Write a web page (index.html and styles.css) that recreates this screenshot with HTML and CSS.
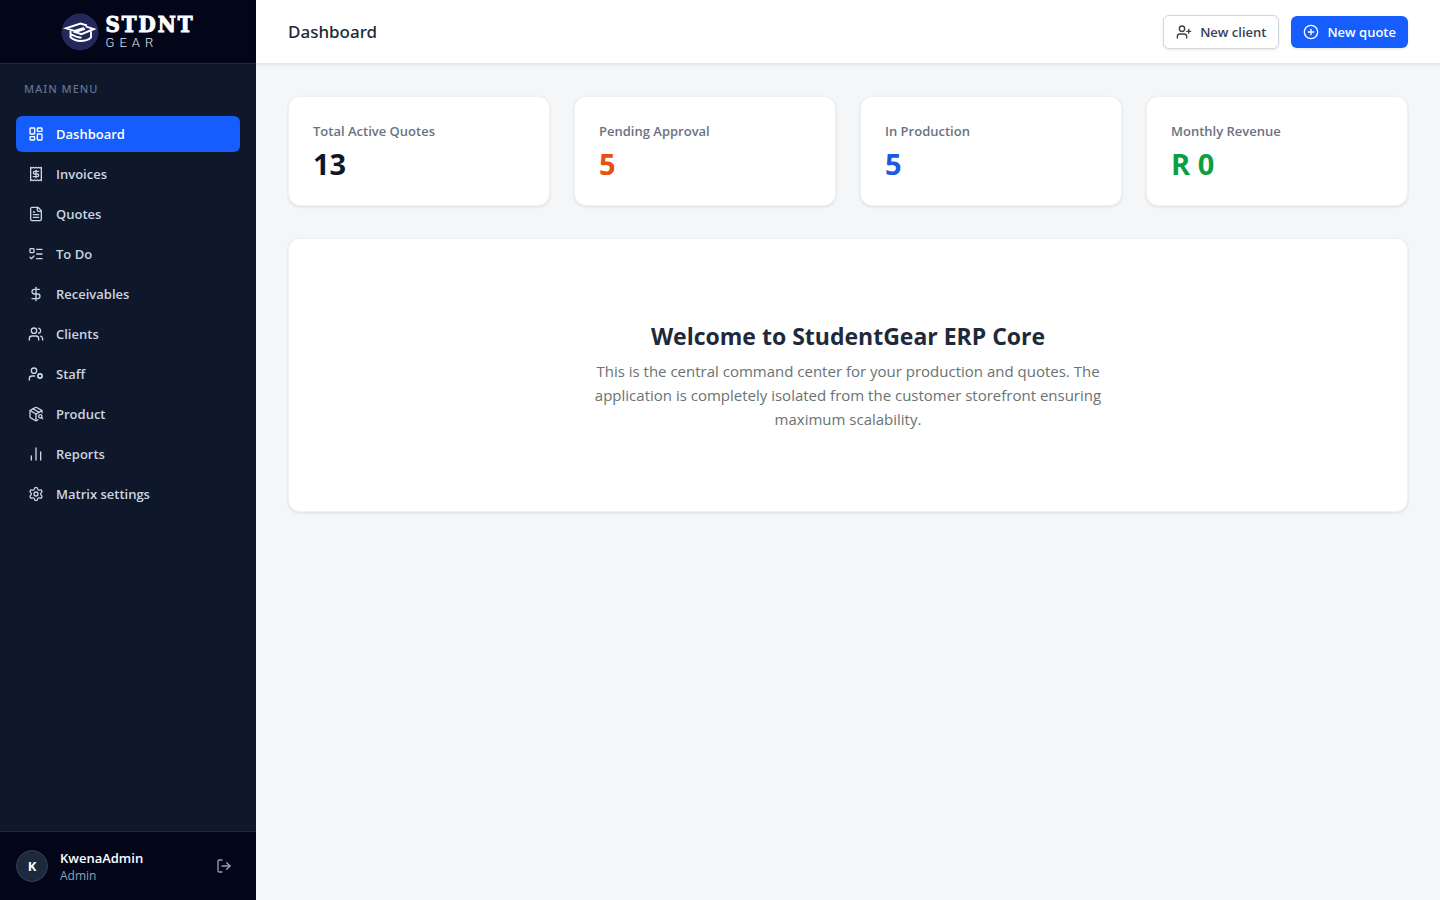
FILE: index.html
```html
<!DOCTYPE html>
<html lang="en">
<head>
  <meta charset="UTF-8">
  <meta name="viewport" content="width=device-width, initial-scale=1.0">
  <title>StudentGear ERP - Dashboard</title>
  <link rel="stylesheet" href="styles.css">
</head>
<body>
  <!-- Sidebar -->
  <aside class="sidebar">
    <div class="brand">
      <svg class="brand-mark" viewBox="0 0 38 38" aria-hidden="true">
        <circle cx="19" cy="19" r="18.500" fill="#23275a"/>
        <g fill="none" stroke="#fff" stroke-width="1.900" stroke-linejoin="miter">
          <path d="M26 12.500 19.500 10.500 5 15.300l8.500 2.700 9.500-3.200M24.500 13.300 33 16l-12.500 5.200-6-2 9.500-3.400"/>
          <path d="M9.500 18v6.300c3 2.500 6 3.700 10 3.700s8-1.200 10.500-3.500v-6.300M9.500 21c4 2.300 6.500 3.500 11 3.700"/>
        </g>
      </svg>
      <div class="brand-name">
        <span class="brand-top">STDNT</span>
        <span class="brand-bottom">GEAR</span>
      </div>
    </div>

    <nav class="menu">
      <h2>Main Menu</h2>
      <a href="#" class="active">
        <svg class="icon" viewBox="0 0 24 24"><rect width="7" height="9" x="3" y="3" rx="1"/><rect width="7" height="5" x="14" y="3" rx="1"/><rect width="7" height="9" x="14" y="12" rx="1"/><rect width="7" height="5" x="3" y="16" rx="1"/></svg>
        Dashboard
      </a>
      <a href="#">
        <svg class="icon" viewBox="0 0 24 24"><path d="M4 2v20l2-1 2 1 2-1 2 1 2-1 2 1 2-1 2 1V2l-2 1-2-1-2 1-2-1-2 1-2-1-2 1Z"/><path d="M16 8h-6a2 2 0 1 0 0 4h4a2 2 0 1 1 0 4H8"/><path d="M12 17.500v-11"/></svg>
        Invoices
      </a>
      <a href="#">
        <svg class="icon" viewBox="0 0 24 24"><path d="M15 2H6a2 2 0 0 0-2 2v16a2 2 0 0 0 2 2h12a2 2 0 0 0 2-2V7Z"/><path d="M14 2v4a2 2 0 0 0 2 2h4"/><path d="M10 9H8"/><path d="M16 13H8"/><path d="M16 17H8"/></svg>
        Quotes
      </a>
      <a href="#">
        <svg class="icon" viewBox="0 0 24 24"><rect x="3" y="4" width="6" height="6" rx="1"/><path d="m3 17 2 2 4-4"/><path d="M13 5h8"/><path d="M13 12h8"/><path d="M13 19h8"/></svg>
        To Do
      </a>
      <a href="#">
        <svg class="icon" viewBox="0 0 24 24"><path d="M12 2v20"/><path d="M17 5H9.500a3.500 3.500 0 0 0 0 7h5a3.500 3.500 0 0 1 0 7H6"/></svg>
        Receivables
      </a>
      <a href="#">
        <svg class="icon" viewBox="0 0 24 24"><path d="M16 21v-2a4 4 0 0 0-4-4H6a4 4 0 0 0-4 4v2"/><circle cx="9" cy="7" r="4"/><path d="M22 21v-2a4 4 0 0 0-3-3.870"/><path d="M16 3.130a4 4 0 0 1 0 7.750"/></svg>
        Clients
      </a>
      <a href="#">
        <svg class="icon" viewBox="0 0 24 24"><circle cx="18" cy="15" r="3"/><circle cx="9" cy="7" r="4"/><path d="M10 15H6a4 4 0 0 0-4 4v2"/><path d="m21.700 16.400-.9-.3"/><path d="m15.200 13.900-.9-.3"/><path d="m16.600 18.700.3-.9"/><path d="m19.100 12.200.3-.9"/><path d="m19.600 18.700-.4-1"/><path d="m16.800 12.300-.4-1"/><path d="m14.300 16.600 1-.4"/><path d="m20.700 13.800 1-.4"/></svg>
        Staff
      </a>
      <a href="#">
        <svg class="icon" viewBox="0 0 24 24"><path d="M21 10V8a2 2 0 0 0-1-1.730l-7-4a2 2 0 0 0-2 0l-7 4A2 2 0 0 0 3 8v8a2 2 0 0 0 1 1.730l7 4a2 2 0 0 0 2 0l2-1.140"/><path d="m7.500 4.270 9 5.150"/><path d="M3.290 7 12 12l8.710-5"/><path d="M12 22V12"/><circle cx="18.500" cy="15.500" r="2.500"/><path d="M20.270 17.270 22 19"/></svg>
        Product
      </a>
      <a href="#">
        <svg class="icon" viewBox="0 0 24 24"><path d="M5 21v-6"/><path d="M12 21V3"/><path d="M19 21V9"/></svg>
        Reports
      </a>
      <a href="#">
        <svg class="icon" viewBox="0 0 24 24"><path d="M9.671 4.136a2.340 2.340 0 0 1 4.659 0 2.340 2.340 0 0 0 3.319 1.915 2.340 2.340 0 0 1 2.330 4.033 2.340 2.340 0 0 0 0 3.831 2.340 2.340 0 0 1-2.330 4.033 2.340 2.340 0 0 0-3.319 1.915 2.340 2.340 0 0 1-4.659 0 2.340 2.340 0 0 0-3.320-1.915 2.340 2.340 0 0 1-2.330-4.033 2.340 2.340 0 0 0 0-3.831A2.340 2.340 0 0 1 6.350 6.051a2.340 2.340 0 0 0 3.319-1.915"/><circle cx="12" cy="12" r="3"/></svg>
        Matrix settings
      </a>
    </nav>

    <div class="user">
      <div class="avatar">K</div>
      <div class="user-info">
        <div class="user-name">KwenaAdmin</div>
        <div class="user-role">Admin</div>
      </div>
      <button class="logout" aria-label="Log out">
        <svg class="icon" viewBox="0 0 24 24"><path d="M9 21H5a2 2 0 0 1-2-2V5a2 2 0 0 1 2-2h4"/><path d="m16 17 5-5-5-5"/><path d="M21 12H9"/></svg>
      </button>
    </div>
  </aside>

  <!-- Main area -->
  <div class="main">
    <header class="topbar">
      <h1>Dashboard</h1>
      <div class="actions">
        <button class="btn btn-outline">
          <svg class="icon" viewBox="0 0 24 24"><path d="M16 21v-2a4 4 0 0 0-4-4H6a4 4 0 0 0-4 4v2"/><circle cx="9" cy="7" r="4"/><path d="M19 8v6"/><path d="M22 11h-6"/></svg>
          New client
        </button>
        <button class="btn btn-primary">
          <svg class="icon" viewBox="0 0 24 24"><circle cx="12" cy="12" r="10"/><path d="M8 12h8"/><path d="M12 8v8"/></svg>
          New quote
        </button>
      </div>
    </header>

    <main class="content">
      <section class="stats">
        <div class="card stat">
          <h3>Total Active Quotes</h3>
          <p>13</p>
        </div>
        <div class="card stat">
          <h3>Pending Approval</h3>
          <p class="orange">5</p>
        </div>
        <div class="card stat">
          <h3>In Production</h3>
          <p class="blue">5</p>
        </div>
        <div class="card stat">
          <h3>Monthly Revenue</h3>
          <p class="green">R 0</p>
        </div>
      </section>

      <section class="card welcome">
        <h2>Welcome to StudentGear ERP Core</h2>
        <p>This is the central command center for your production and quotes. The application is completely isolated from the customer storefront ensuring maximum scalability.</p>
      </section>
    </main>
  </div>
</body>
</html>
```

FILE: styles.css
```css
* { box-sizing: border-box; margin: 0; padding: 0; }
body { display: flex; min-height: 100vh; font-family: "Segoe UI", "Open Sans", "Noto Sans", sans-serif; font-size: 16px; line-height: 24px; color: #101828; background: #f5f6f8; }
button { font: inherit; cursor: pointer; }
.icon { width: 16px; height: 16px; flex-shrink: 0; fill: none; stroke: currentColor; stroke-width: 2; stroke-linecap: round; stroke-linejoin: round; }

/* Sidebar */
.sidebar { display: flex; flex-direction: column; flex: 0 0 256px; background: #0f172b; color: #cad5e2; }
.brand { display: flex; align-items: center; justify-content: center; gap: 6px; height: 64px; background: #020618; border-bottom: 1px solid #1d293d; }
.brand-mark { width: 38px; height: 38px; }
.brand-name { display: flex; flex-direction: column; color: #fff; }
.brand-top { font-family: "DejaVu Serif Condensed", "DejaVu Serif", serif; font-size: 22px; font-weight: 700; line-height: 22px; letter-spacing: 2px; -webkit-text-stroke: 1px #fff; }
.brand-bottom { font-family: Roboto, sans-serif; font-size: 13px; font-weight: 300; line-height: 16px; letter-spacing: 5px; color: #e2e8f0; }
.menu { display: flex; flex-direction: column; flex: 1; gap: 4px; padding: 16px; }
.menu h2 { padding: 0 8px; margin-bottom: 14px; font-family: "Segoe UI", "Noto Sans", sans-serif; font-size: 11px; font-weight: 500; line-height: 18px; letter-spacing: 1px; text-transform: uppercase; color: #62748e; }
.menu a { display: flex; align-items: center; gap: 12px; padding: 8px 12px; border-radius: 6px; font-size: 13px; font-weight: 600; line-height: 20px; color: #cad5e2; text-decoration: none; }
.menu a:hover { background: #1d293d; }
.menu a.active { background: #155dfc; color: #fff; }
.user { display: flex; align-items: center; gap: 12px; padding: 16px; background: #020618; border-top: 1px solid #1d293d; }
.avatar { display: flex; align-items: center; justify-content: center; width: 32px; height: 32px; border: 1px solid #314158; border-radius: 50%; background: #1d293d; font-size: 13px; font-weight: 700; color: #fff; }
.user-info { flex: 1; }
.user-name { font-size: 13px; font-weight: 600; line-height: 20px; color: #fff; }
.user-role { font-size: 12px; line-height: 16px; color: #90a1b9; }
.logout { display: flex; padding: 8px; border: none; background: none; color: #90a1b9; }

/* Top bar */
.main { display: flex; flex-direction: column; flex: 1; min-width: 0; }
.topbar { display: flex; align-items: center; justify-content: space-between; height: 64px; padding: 0 32px; background: #fff; border-bottom: 1px solid #e5e7eb; box-shadow: 0 1px 3px rgba(0, 0, 0, 0.08); }
.topbar h1 { font-family: "Segoe UI", "Noto Sans", sans-serif; font-size: 17px; font-weight: 500; line-height: 28px; color: #1e2939; }
.actions { display: flex; align-items: center; gap: 12px; }
.btn { display: flex; align-items: center; gap: 8px; padding: 6px 12px; border: none; border-radius: 6px; font-size: 13px; font-weight: 600; line-height: 20px; box-shadow: 0 1px 3px rgba(0, 0, 0, 0.1); }
.btn-outline { border: 1px solid #d1d5dc; background: #fff; color: #364153; }
.btn-primary { background: #155dfc; color: #fff; }

/* Dashboard content */
.content { display: flex; flex-direction: column; gap: 32px; padding: 32px; }
.card { border: 1px solid #f0f1f3; border-radius: 12px; background: #fff; box-shadow: 0 1px 3px rgba(0, 0, 0, 0.1); }
.stats { display: grid; grid-template-columns: repeat(4, 1fr); gap: 24px; }
.stat { padding: 24px; }
.stat h3 { margin-bottom: 6px; font-size: 13px; font-weight: 600; line-height: 20px; color: #6a7282; }
.stat p { font-size: 29px; font-weight: 700; line-height: 34px; }
.stat .orange { color: #e7500d; }
.stat .blue { color: #1c5ae0; }
.stat .green { color: #0b9f40; }
.welcome { padding: 80px 32px; text-align: center; }
.welcome h2 { margin-bottom: 6px; font-size: 23px; font-weight: 700; line-height: 34px; color: #1e2939; }
.welcome p { max-width: 520px; margin: 0 auto; font-size: 15px; color: #6a7272; }
```
